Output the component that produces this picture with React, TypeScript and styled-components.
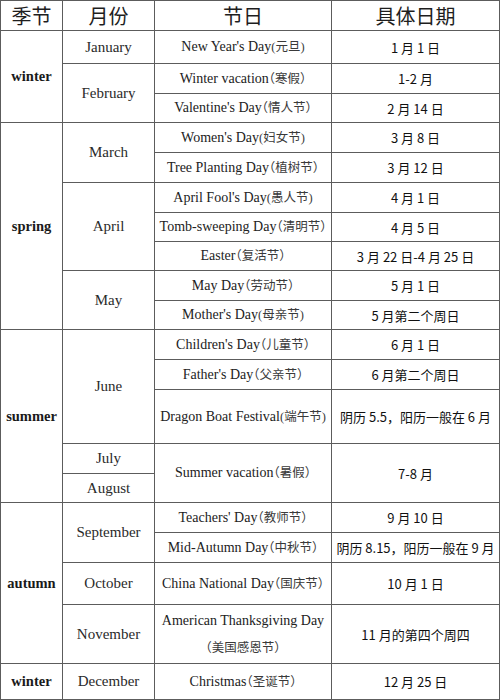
import styled, { createGlobalStyle } from "styled-components";

const GlobalStyle = createGlobalStyle`
    html, body {
        margin: 0;
        padding: 0;
        background: #ffffff;
    }
`;

type Holiday = {
    season?: { name: string; span: number };
    month?: { name: string; span: number };
    holiday?: { en: string; zh: string; span?: number; tall?: boolean };
    date?: { text: string; span?: number };
    height: number;
};

const rows: Holiday[] = [
    {
        season: { name: "winter", span: 3 },
        month: { name: "January", span: 1 },
        holiday: { en: "New Year's Day", zh: "(元旦)" },
        date: { text: "1 月 1 日" },
        height: 33,
    },
    {
        month: { name: "February", span: 2 },
        holiday: { en: "Winter vacation", zh: "（寒假）" },
        date: { text: "1-2 月" },
        height: 30,
    },
    {
        holiday: { en: "Valentine's Day", zh: "（情人节）" },
        date: { text: "2 月 14 日" },
        height: 29,
    },
    {
        season: { name: "spring", span: 7 },
        month: { name: "March", span: 2 },
        holiday: { en: "Women's Day", zh: "(妇女节)" },
        date: { text: "3 月 8 日" },
        height: 30,
    },
    {
        holiday: { en: "Tree Planting Day", zh: "（植树节）" },
        date: { text: "3 月 12 日" },
        height: 30,
    },
    {
        month: { name: "April", span: 3 },
        holiday: { en: "April Fool's Day", zh: "(愚人节)" },
        date: { text: "4 月 1 日" },
        height: 30,
    },
    {
        holiday: { en: "Tomb-sweeping Day", zh: "（清明节）" },
        date: { text: "4 月 5 日" },
        height: 29,
    },
    {
        holiday: { en: "Easter", zh: "（复活节）" },
        date: { text: "3 月 22 日-4 月 25 日" },
        height: 29,
    },
    {
        month: { name: "May", span: 2 },
        holiday: { en: "May Day", zh: "（劳动节）" },
        date: { text: "5 月 1 日" },
        height: 30,
    },
    {
        holiday: { en: "Mother's Day", zh: "(母亲节)" },
        date: { text: "5 月第二个周日" },
        height: 29,
    },
    {
        season: { name: "summer", span: 5 },
        month: { name: "June", span: 3 },
        holiday: { en: "Children's Day", zh: "（儿童节）" },
        date: { text: "6 月 1 日" },
        height: 30,
    },
    {
        holiday: { en: "Father's Day", zh: "（父亲节）" },
        date: { text: "6 月第二个周日" },
        height: 30,
    },
    {
        holiday: { en: "Dragon Boat Festival", zh: "(端午节)" },
        date: { text: "阴历 5.5，阳历一般在 6 月" },
        height: 54,
    },
    {
        month: { name: "July", span: 1 },
        holiday: { en: "Summer vacation", zh: "（暑假）", span: 2 },
        date: { text: "7-8 月", span: 2 },
        height: 30,
    },
    {
        month: { name: "August", span: 1 },
        height: 29,
    },
    {
        season: { name: "autumn", span: 4 },
        month: { name: "September", span: 2 },
        holiday: { en: "Teachers' Day", zh: "（教师节）" },
        date: { text: "9 月 10 日" },
        height: 30,
    },
    {
        holiday: { en: "Mid-Autumn Day", zh: "（中秋节）" },
        date: { text: "阴历 8.15，阳历一般在 9 月" },
        height: 30,
    },
    {
        month: { name: "October", span: 1 },
        holiday: { en: "China National Day", zh: "（国庆节）" },
        date: { text: "10 月 1 日" },
        height: 42,
    },
    {
        month: { name: "November", span: 1 },
        holiday: { en: "American Thanksgiving Day\n", zh: "（美国感恩节）", tall: true },
        date: { text: "11 月的第四个周四" },
        height: 59,
    },
    {
        season: { name: "winter", span: 1 },
        month: { name: "December", span: 1 },
        holiday: { en: "Christmas", zh: "（圣诞节）" },
        date: { text: "12 月 25 日" },
        height: 36,
    },
];

export default function App() {
    return (
        <Page>
            <GlobalStyle />
            <Table>
                <colgroup>
                    <col style={{ width: 62 }} />
                    <col style={{ width: 92 }} />
                    <col style={{ width: 177 }} />
                    <col style={{ width: 168 }} />
                </colgroup>
                <thead>
                    <tr>
                        <HeadCell>季节</HeadCell>
                        <HeadCell>月份</HeadCell>
                        <HeadCell>节日</HeadCell>
                        <HeadCell>具体日期</HeadCell>
                    </tr>
                </thead>
                <tbody>
                    {rows.map((row, idx) => (
                        <Row key={idx} $height={row.height}>
                            {row.season && (
                                <SeasonCell rowSpan={row.season.span}>
                                    {row.season.name}
                                </SeasonCell>
                            )}
                            {row.month && (
                                <MonthCell rowSpan={row.month.span}>
                                    {row.month.name}
                                </MonthCell>
                            )}
                            {row.holiday && (
                                <HolidayCell
                                    rowSpan={row.holiday.span ?? 1}
                                    $tall={row.holiday.tall}
                                >
                                    {row.holiday.en}
                                    <Zh>{row.holiday.zh}</Zh>
                                </HolidayCell>
                            )}
                            {row.date && (
                                <DateCell rowSpan={row.date.span ?? 1}>
                                    {row.date.text}
                                </DateCell>
                            )}
                        </Row>
                    ))}
                </tbody>
            </Table>
        </Page>
    );
}

const Page = styled.div`
    width: 500px;
    height: 700px;
    background: #ffffff;
    overflow: hidden;
`;

const Table = styled.table`
    width: 499px;
    table-layout: fixed;
    border-collapse: collapse;
    color: #222;
`;

const Cell = styled.td`
    border: 1px solid #5c5c5c;
    padding: 0 1px;
    text-align: center;
    vertical-align: middle;
    overflow: hidden;
`;

const HeadCell = styled(Cell).attrs({ as: "th" })`
    height: 28px;
    font-family: "Noto Sans CJK SC", sans-serif;
    font-size: 20px;
    font-weight: 400;
    color: #1e1e1e;
`;

const Row = styled.tr<{ $height: number }>`
    height: ${({ $height }) => $height}px;
`;

const SeasonCell = styled(Cell)`
    font-family: "Liberation Serif", "Noto Sans CJK SC", serif;
    font-size: 14.5px;
    font-weight: 700;
    color: #1a1a1a;
`;

const MonthCell = styled(Cell)`
    font-family: "Liberation Serif", "Noto Sans CJK SC", serif;
    font-size: 15px;
    color: #2a2a2a;
`;

const HolidayCell = styled(Cell)<{ $tall?: boolean }>`
    font-family: "Liberation Serif", "Noto Sans CJK SC", serif;
    font-size: 14px;
    color: #222;
    white-space: pre-line;
    line-height: ${({ $tall }) => ($tall ? "27px" : "16px")};
`;

const Zh = styled.span`
    font-family: "Liberation Serif", "Noto Sans CJK SC", serif;
    font-size: 12.5px;
    color: #3a3a3a;
    font-feature-settings: "halt";
`;

const DateCell = styled(Cell)`
    font-family: "Noto Sans CJK SC", sans-serif;
    font-size: 13px;
    font-weight: 400;
    white-space: nowrap;
    color: #111;
`;
